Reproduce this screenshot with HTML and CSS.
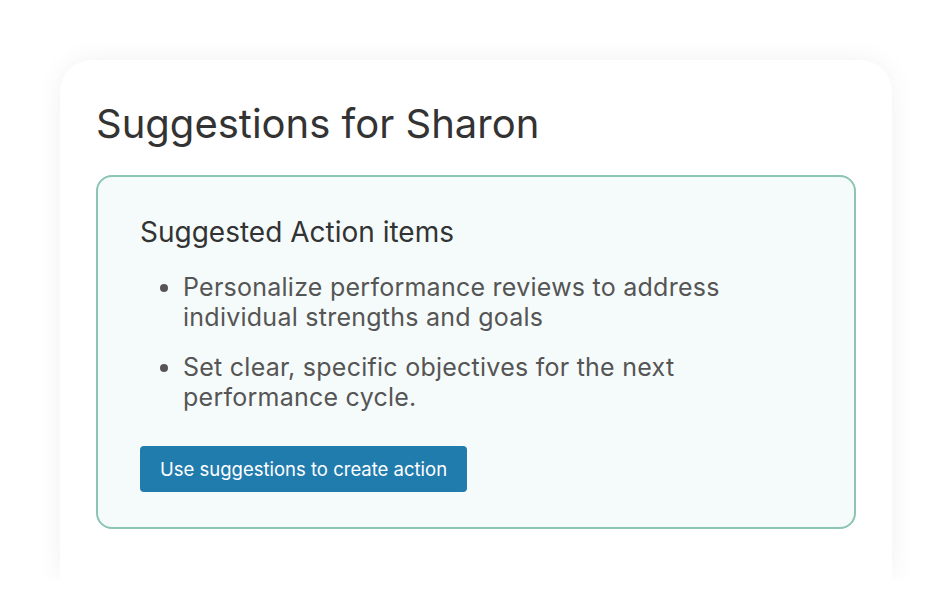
FILE: index.html
```html
<!DOCTYPE html>
<html lang="en">
<head>
    <meta charset="UTF-8">
    <meta name="viewport" content="width=device-width, initial-scale=1.0">
    <title>Suggestions</title>
    <link rel="stylesheet" href="styles.css">
</head>
<body>

    <div class="card">
        <h1>Suggestions for Sharon</h1>
        <div class="suggest-box">
            <h3>Suggested Action items</h3>
            <ul>
                <li>Personalize performance reviews to address individual strengths and goals</li>
                <li>Set clear, specific objectives for the next performance cycle.</li>
            </ul>
            <button class="use-btn">Use suggestions to create action</button>
        </div>
    </div>

</body>
</html>
```

FILE: styles.css
```css
body {
    font-family: Inter, "Noto Sans", sans-serif;
    margin: 0;
    padding: 60px 60px 0;
    background-color: #ffffff;
}
.card {
    width: 832px;
    height: 520px;
    box-sizing: border-box;
    background: white;
    padding: 40px 36px;
    border-radius: 32px 32px 0 0;
    box-shadow: 0 0 28px rgba(0, 0, 0, 0.06);
}
h1 {
    margin: 0 0 27px;
    font-size: 40px;
    line-height: 48px;
    font-weight: 400;
    color: #333333;
}
.suggest-box {
    background: #f5fbfb;
    border: 2px solid #8cc5b1;
    border-radius: 16px;
    padding: 39px 42px 35px;
}
h3 {
    margin: 0 0 24px;
    font-size: 28px;
    line-height: 32px;
    font-weight: 400;
    color: #333333;
}
ul {
    margin: 0 0 34px;
    padding-left: 43px;
    max-width: 580px;
}
li {
    font-size: 25px;
    line-height: 30px;
    color: #555555;
    margin-bottom: 20px;
    letter-spacing: 0.25px;
}
li:last-child {
    margin-bottom: 0;
}
.use-btn {
    font-family: Inter, "Noto Sans", sans-serif;
    background: #217cae;
    color: white;
    border: none;
    border-radius: 4px;
    font-size: 18.5px;
    height: 46px;
    padding: 0 20px;
    cursor: pointer;
}
```
